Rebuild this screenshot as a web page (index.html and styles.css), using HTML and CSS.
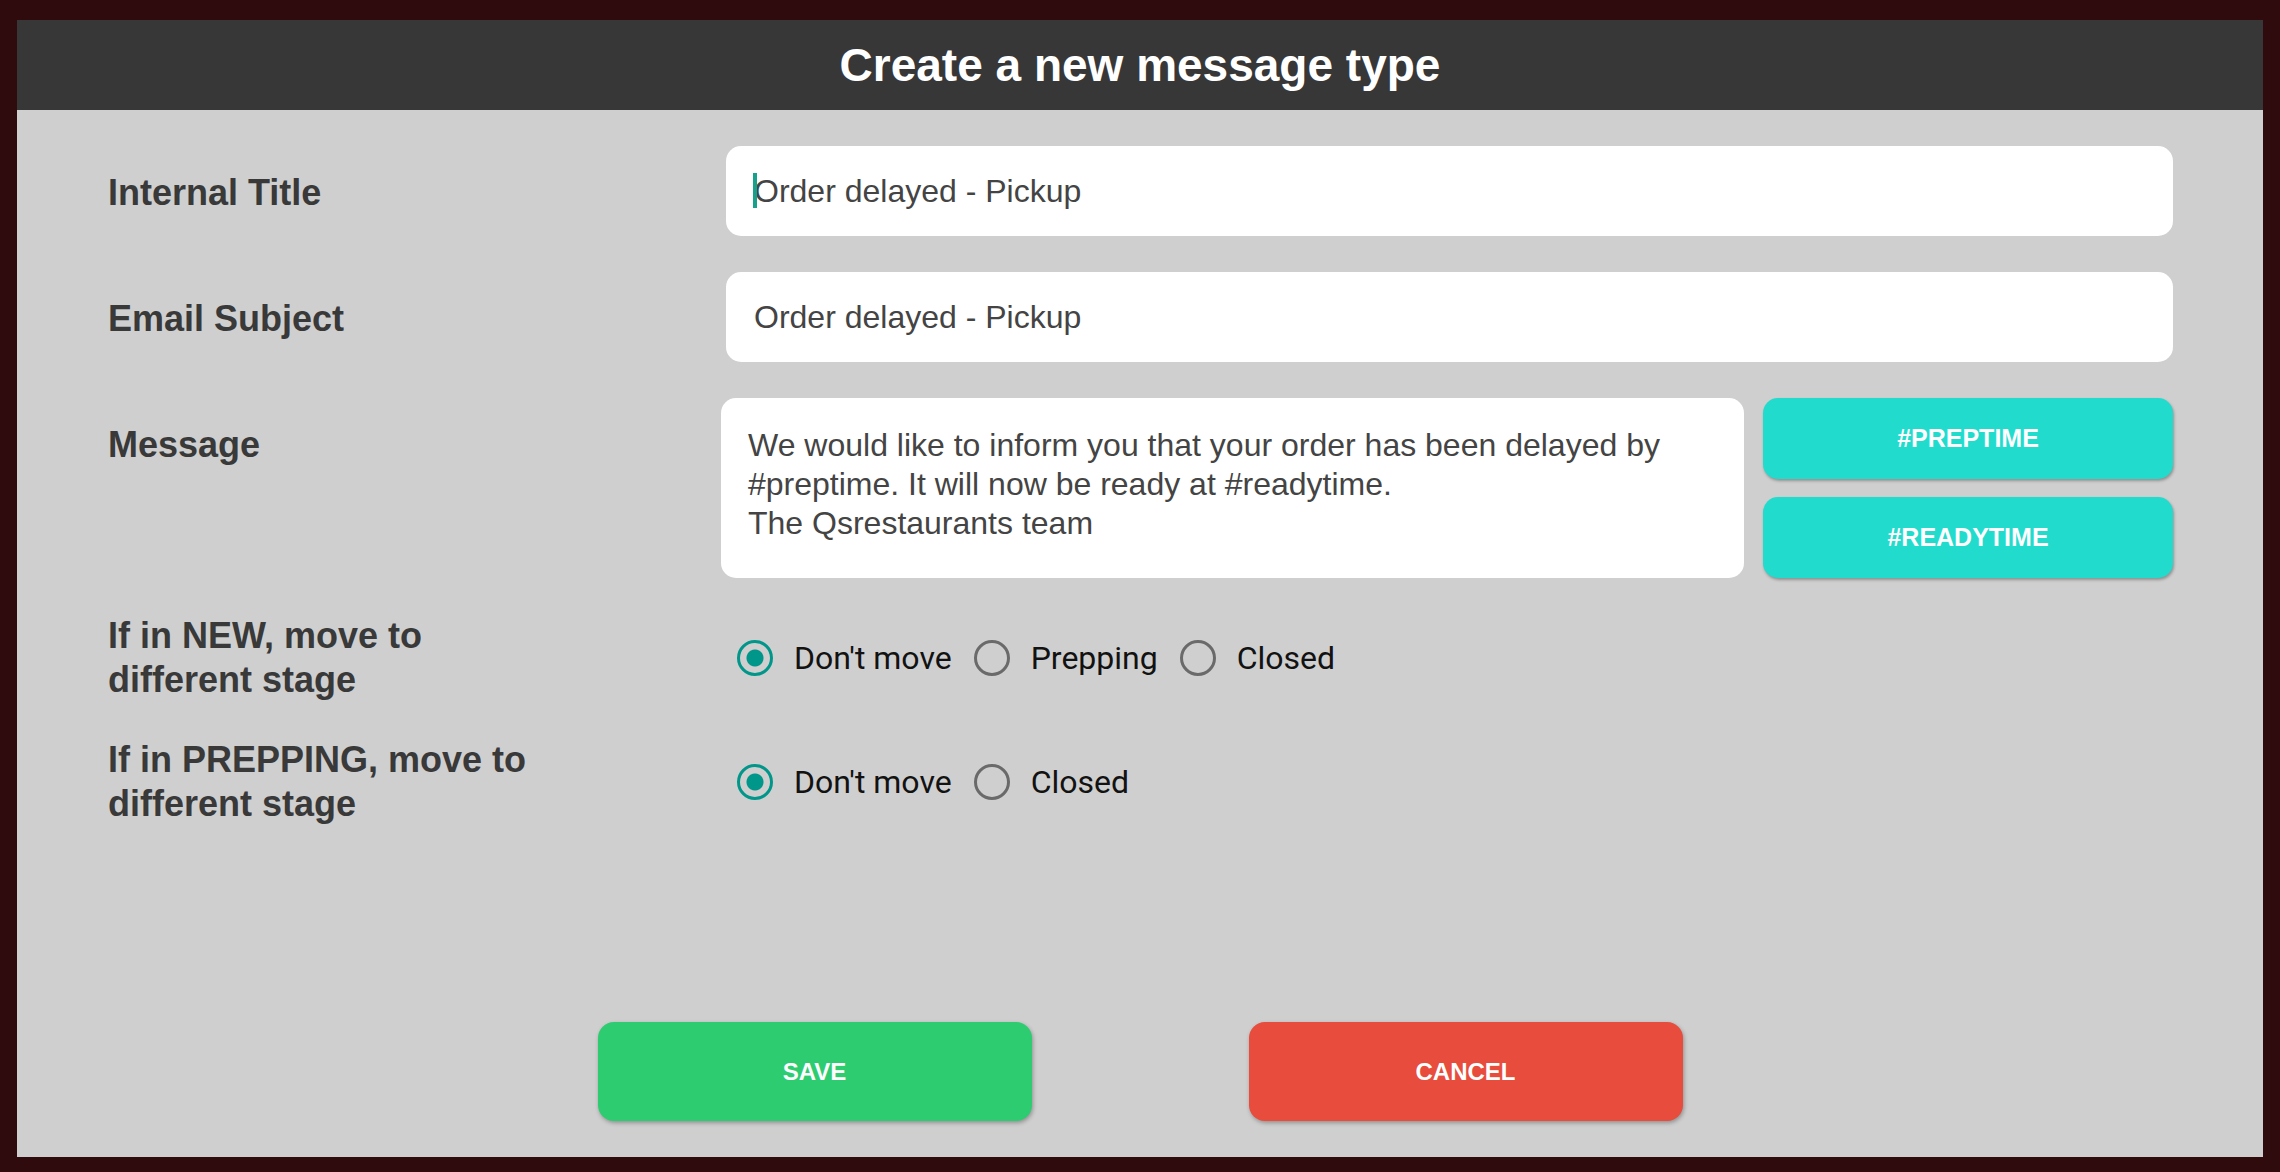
FILE: index.html
```html
<!DOCTYPE html>
<html lang="en">
<head>
  <meta charset="UTF-8" />
  <meta name="viewport" content="width=device-width, initial-scale=1.0"/>
  <title>Create a new message type</title>
  <link rel="stylesheet" href="styles.css">
</head>
<body>
  <div class="dialog">
    <div class="dialog-header">
      <h1>Create a new message type</h1>
    </div>

    <form class="form-grid">
      <label class="field-label" for="internalTitle">Internal Title</label>
      <div class="field">
        <input class="text-input" type="text" id="internalTitle" value="Order delayed - Pickup" />
        <span class="caret"></span>
      </div>

      <label class="field-label" for="emailSubject">Email Subject</label>
      <div class="field">
        <input class="text-input" type="text" id="emailSubject" value="Order delayed - Pickup" />
      </div>

      <label class="field-label" for="message">Message</label>
      <div class="field message-field">
        <textarea class="message-input" id="message">We would like to inform you that your order has been delayed by #preptime. It will now be ready at #readytime.
The Qsrestaurants team</textarea>
        <div class="tag-buttons">
          <button type="button" class="tag-btn">#PREPTIME</button>
          <button type="button" class="tag-btn">#READYTIME</button>
        </div>
      </div>

      <div class="field-label stage-label">If in NEW, move to different stage</div>
      <div class="radio-group">
        <label class="radio"><input type="radio" name="newStage" checked /> Don't move</label>
        <label class="radio"><input type="radio" name="newStage" /> Prepping</label>
        <label class="radio"><input type="radio" name="newStage" /> Closed</label>
      </div>

      <div class="field-label stage-label">If in PREPPING, move to different stage</div>
      <div class="radio-group">
        <label class="radio"><input type="radio" name="prepStage" checked /> Don't move</label>
        <label class="radio"><input type="radio" name="prepStage" /> Closed</label>
      </div>
    </form>

    <div class="dialog-footer">
      <button type="button" class="action-btn save">SAVE</button>
      <button type="button" class="action-btn cancel">CANCEL</button>
    </div>
  </div>
</body>
</html>
```

FILE: styles.css
```css
html, body {
  height: 100%;
}
body {
  margin: 0;
  box-sizing: border-box;
  padding: 20px 17px 15px 17px;
  background-color: #2f0b0d;
  font-family: "Liberation Sans", Arial, sans-serif;
}
.dialog {
  height: 100%;
  display: flex;
  flex-direction: column;
  background-color: #cfcfcf;
}
.dialog-header {
  height: 90px;
  background-color: #373737;
  display: flex;
  align-items: center;
  justify-content: center;
}
.dialog-header h1 {
  margin: 0;
  color: #fff;
  font-size: 46px;
  font-weight: bold;
}
.form-grid {
  display: grid;
  grid-template-columns: 613px 1fr;
  row-gap: 36px;
  align-items: start;
  padding: 36px 90px 0 91px;
}
.field-label {
  max-width: 430px;
  padding-top: 25px;
  font-size: 36px;
  line-height: 44px;
  font-weight: bold;
  color: #393939;
}
.stage-label {
  padding-top: 0;
}
.field {
  position: relative;
}
.text-input {
  display: block;
  box-sizing: border-box;
  width: calc(100% - 5px);
  height: 90px;
  margin-left: 5px;
  padding: 0 28px;
  border: none;
  border-radius: 15px;
  background-color: #fff;
  font-family: "Liberation Sans", Arial, sans-serif;
  font-size: 32px;
  color: #444;
  outline: none;
}
.caret {
  position: absolute;
  left: 32px;
  top: 27px;
  width: 4px;
  height: 35px;
  background-color: #17a08b;
}
.message-field {
  display: flex;
  gap: 19px;
}
.message-input {
  flex: 1;
  box-sizing: border-box;
  height: 180px;
  margin: 0;
  padding: 28px 27px;
  border: none;
  border-radius: 15px;
  background-color: #fff;
  font-family: "Liberation Sans", Arial, sans-serif;
  font-size: 32px;
  line-height: 39px;
  color: #444;
  resize: none;
  overflow: hidden;
  outline: none;
}
.tag-buttons {
  width: 410px;
  display: flex;
  flex-direction: column;
  gap: 18px;
}
.tag-btn {
  height: 81px;
  border: none;
  border-radius: 15px;
  background-color: #21dccd;
  color: #fff;
  font-family: "Liberation Sans", Arial, sans-serif;
  font-size: 25px;
  font-weight: bold;
  box-shadow: 1px 2px 3px rgba(0, 0, 0, 0.3);
}
.radio-group {
  align-self: center;
  display: flex;
  align-items: center;
  padding-left: 16px;
}
.radio {
  display: inline-flex;
  align-items: center;
  gap: 21px;
  margin-right: 22px;
  font-family: Roboto, "Noto Sans", sans-serif;
  font-size: 32px;
  color: #121212;
}
.radio input {
  appearance: none;
  box-sizing: border-box;
  width: 36px;
  height: 36px;
  margin: 0;
  border: 3px solid #6a6a6a;
  border-radius: 50%;
  background-color: transparent;
}
.radio input:checked {
  border-color: #00968a;
  background: radial-gradient(circle, #00968a 0 8px, transparent 9px);
}
.dialog-footer {
  margin-top: auto;
  padding-bottom: 36px;
  display: flex;
  justify-content: center;
  gap: 217px;
}
.action-btn {
  width: 434px;
  height: 99px;
  border: none;
  border-radius: 16px;
  color: #fff;
  font-family: "Liberation Sans", Arial, sans-serif;
  font-size: 24px;
  font-weight: bold;
  box-shadow: 1px 2px 4px rgba(0, 0, 0, 0.3);
}
.action-btn.save {
  background-color: #2ecc71;
}
.action-btn.cancel {
  background-color: #e74c3c;
}
```
